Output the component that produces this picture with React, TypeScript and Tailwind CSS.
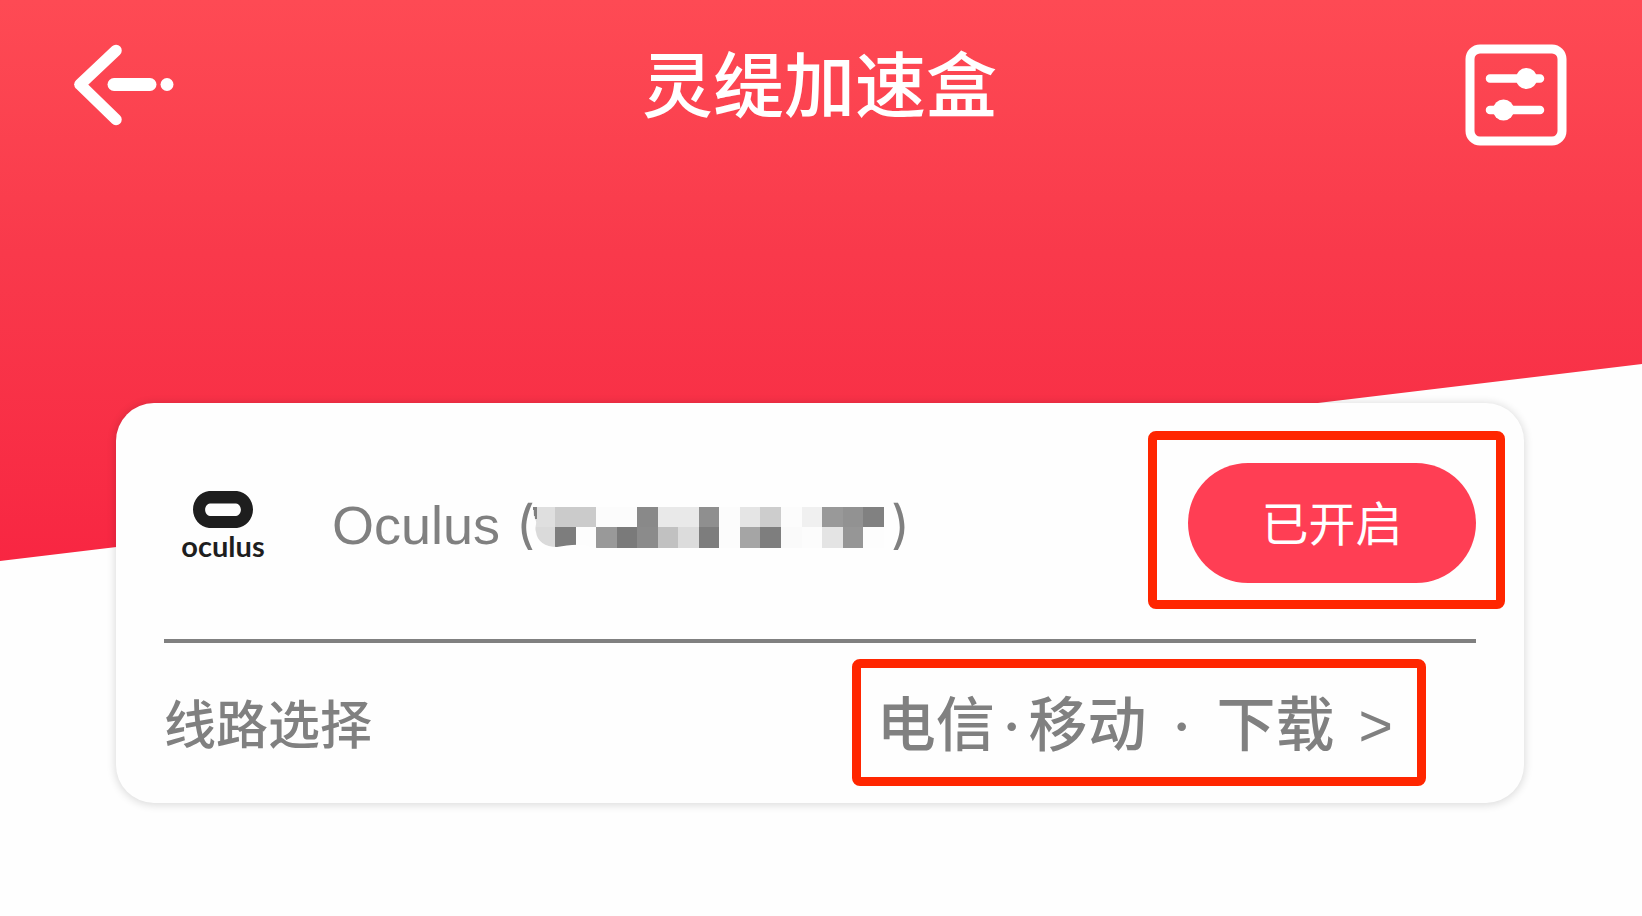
const CELL_EDGES = [0, 22, 43, 63, 84, 104, 125, 145, 166, 186, 207, 227, 248, 269, 289, 310, 330, 351];

const MASK_ROWS = [
  ['#dfdfdf', '#cbcbcb', '#cbcbcb', '#fcfcfc', '#fcfcfc', '#898989', '#e9e9e9', '#e9e9e9', '#8f8f8f', '#fcfcfc', '#e5e5e5', '#cdcdcd', '#fcfcfc', '#f0f0f0', '#999999', '#929292', '#818181'],
  ['#dadada', '#7d7d7d', '#fdfdfd', '#999999', '#7a7a7a', '#8b8b8b', '#c1c1c1', '#dcdcdc', '#7d7d7d', '#fcfcfc', '#a5a5a5', '#7e7e7e', '#fafafa', '#fcfcfc', '#e4e4e4', '#969696', '#fdfdfd'],
];

function BackIcon() {
  return (
    <svg width="100" height="82" viewBox="0 0 100 82" fill="none" stroke="#fff" aria-hidden="true">
      <path d="M42 6.500 L6 40.500 L42 75.500" strokeWidth="11.500" strokeLinecap="round" strokeLinejoin="round" />
      <path d="M7 34 L0 40.500 L7 47 Z" fill="#fff" stroke="none" />
      <path d="M40 40.500 H76" strokeWidth="13" strokeLinecap="round" />
      <circle cx="93" cy="40.500" r="6.500" fill="#fff" stroke="none" />
    </svg>
  );
}

function SettingsIcon() {
  return (
    <svg width="102" height="102" viewBox="0 0 102 102" fill="none" stroke="#fff" aria-hidden="true">
      <rect x="5" y="5" width="92" height="92" rx="10" strokeWidth="9" />
      <path d="M25 34.500 H75 M25 66 H75" strokeWidth="8.500" strokeLinecap="round" />
      <circle cx="61.500" cy="34.500" r="10.500" fill="#fff" stroke="none" />
      <circle cx="38.500" cy="66" r="10.500" fill="#fff" stroke="none" />
    </svg>
  );
}

function OculusLogo() {
  return (
    <div className="flex w-[84px] flex-col items-center">
      <svg width="60" height="37" viewBox="0 0 60 37" aria-hidden="true">
        <path
          fill="#1e1e1e"
          fillRule="evenodd"
          d="M16 0 H44 C53 1 60 9 60 18.500 C60 28 53 36 44 37 H16 C7 36 0 28 0 18.500 C0 9 7 1 16 0 Z M17 12.500 C10.500 13.500 10.500 24 17 25 H43 C49.500 24 49.500 13.500 43 12.500 Z"
        />
      </svg>
      <span className="mt-1 font-['Lato',sans-serif] text-[29px] leading-7 font-bold text-[#1e1e1e]">oculus</span>
    </div>
  );
}

function MaskedAccount() {
  return (
    <svg width="352" height="41" viewBox="0 0 352 41" shapeRendering="crispEdges" aria-hidden="true">
      <defs>
        <clipPath id="mask-edge">
          <path d="M0 0 H352 V41 H64 L50 38 C40 37 32 39 24 40 C12 40 4 34 3 25 C1 20 5 16 2 12 C0 8 0 4 0 0 Z" />
        </clipPath>
      </defs>
      <g clipPath="url(#mask-edge)">
        {MASK_ROWS.map((row, r) =>
          row.map((fill, c) => (
            <rect
              key={`${r}-${c}`}
              x={CELL_EDGES[c]}
              y={r === 0 ? 0 : 20}
              width={CELL_EDGES[c + 1] - CELL_EDGES[c]}
              height={r === 0 ? 20 : 21}
              fill={fill}
            />
          )),
        )}
        <path d="M0 0 H4 V12 L2 12 Z" fill="#808080" />
      </g>
    </svg>
  );
}

export default function App() {
  return (
    <div className="min-h-screen bg-[#fefefe] font-['Noto_Sans_CJK_SC',sans-serif] text-[#808080]">
      <div className="h-[561px] bg-linear-to-b from-[#fe4a54] via-[#f9394b] via-45% to-[#f82642] [clip-path:polygon(0_0,100%_0,100%_364px,0_100%)]">
        <header className="flex items-start justify-between pt-11 pr-[75px] pl-[74px] text-white">
          <button type="button" aria-label="返回">
            <BackIcon />
          </button>
          <h1 className="text-[71px] leading-[72px] font-medium">灵缇加速盒</h1>
          <button type="button" aria-label="设置">
            <SettingsIcon />
          </button>
        </header>
      </div>

      <main className="relative -mt-[158px] pr-[118px] pl-[116px]">
        <section className="rounded-[38px] bg-[#fefefe] shadow-[0_1px_8px_1px_rgba(0,0,0,0.14)]">
          <div className="flex h-[236px] items-center justify-between pr-[19px] pb-0.5 pl-[65px]">
            <div className="flex items-center pt-2.5">
              <OculusLogo />
              <div className="ml-[67px] flex items-center font-['Liberation_Sans',sans-serif] text-[54px] leading-[60px]">
                <span>Oculus</span>
                <span className="ml-4 font-['Inter',sans-serif] text-[52px]">(</span>
                <div className="-ml-0.5 pt-1">
                  <MaskedAccount />
                </div>
                <span className="ml-1.5 font-['Inter',sans-serif] text-[52px]">)</span>
              </div>
            </div>
            <div className="rounded-lg border-9 border-[#ff2600] pt-[23px] pr-5 pb-[17px] pl-[31px]">
              <button
                type="button"
                className="flex h-[120px] w-72 items-center justify-center rounded-full bg-[#ff3e54] pb-1 text-[47px] leading-[60px] text-white"
              >
                已开启
              </button>
            </div>
          </div>
          <hr className="mx-12 border-t-4 border-[#808080]" />
          <div className="flex h-40 items-center justify-between pr-[98px] pb-0.5 pl-12">
            <span className="text-[52px] leading-[60px] font-medium">线路选择</span>
            <button
              type="button"
              className="flex h-[127px] items-center rounded-lg border-9 border-[#ff2600] pt-2 pr-6 pl-4 font-['Liberation_Sans','Noto_Sans_CJK_SC',sans-serif] text-[59px] leading-[60px] font-medium"
            >
              <span>电信</span>
              <span className="mx-2 font-['Inter',sans-serif]">·</span>
              <span>移动</span>
              <span className="mx-[26px] font-['Inter',sans-serif]">·</span>
              <span>下载</span>
              <span className="ml-6">&gt;</span>
            </button>
          </div>
        </section>
      </main>
    </div>
  );
}
